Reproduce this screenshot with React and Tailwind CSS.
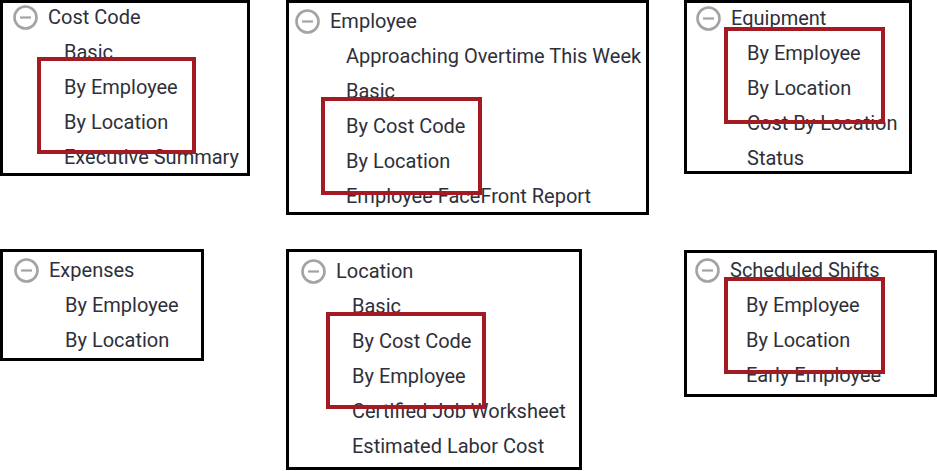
import React from "react";

const panels = [
  {
    title: "Cost Code",
    items: ["Basic", "By Employee", "By Location", "Executive Summary"],
    box: "left-0 top-0 w-[250px] h-[176px]",
    list: "-mt-[3px] pl-[10px]",
    red: "left-[34px] top-[54px] w-[159px] h-[97px]",
  },
  {
    title: "Employee",
    items: ["Approaching Overtime This Week", "Basic", "By Cost Code", "By Location", "Employee FaceFront Report"],
    box: "left-[286px] top-0 w-[363px] h-[215px]",
    list: "mt-[1px] pl-[6px]",
    red: "left-[32px] top-[94px] w-[161px] h-[98px]",
  },
  {
    title: "Equipment",
    items: ["By Employee", "By Location", "Cost By Location", "Status"],
    box: "left-[684px] top-0 w-[228px] h-[174px]",
    list: "-mt-[2px] pl-[9px]",
    red: "left-[37px] top-[24px] w-[161px] h-[97px]",
  },
  {
    title: "Expenses",
    items: ["By Employee", "By Location"],
    box: "left-0 top-[249px] w-[204px] h-[112px]",
    list: "mt-[1px] pl-[11px]",
  },
  {
    title: "Location",
    items: ["Basic", "By Cost Code", "By Employee", "Certified Job Worksheet", "Estimated Labor Cost"],
    box: "left-[286px] top-[249px] w-[296px] h-[221px]",
    list: "mt-[2px] pl-[12px]",
    red: "left-[37px] top-[60px] w-[160px] h-[97px]",
  },
  {
    title: "Scheduled Shifts",
    items: ["By Employee", "By Location", "Early Employee"],
    box: "left-[684px] top-[250px] w-[253px] h-[147px]",
    list: "pl-[8px]",
    red: "left-[37px] top-[24px] w-[161px] h-[97px]",
  },
];

function MinusCircle() {
  return (
    <svg width="25" height="25" viewBox="0 0 25 25" className="shrink-0">
      <circle cx="12.5" cy="12.5" r="11" fill="none" stroke="#a3a3a3" strokeWidth="2.6" />
      <line x1="7" y1="12.5" x2="18" y2="12.5" stroke="#a3a3a3" strokeWidth="2.2" />
    </svg>
  );
}

function Panel({ p }) {
  return (
    <div className={`absolute ${p.box} border-[3px] border-black bg-white overflow-hidden`}>
      <div className={`${p.list} text-[20px] leading-[35px] text-[#2f2f3a] whitespace-nowrap`}>
        <div className="flex items-center gap-[10px]">
          <MinusCircle />
          <span>{p.title}</span>
        </div>
        <div className="pl-[51px]">
          {p.items.map((it) => (
            <div key={it}>{it}</div>
          ))}
        </div>
      </div>
      {p.red && <div className={`absolute ${p.red} border-4 border-[#a31a22]`} />}
    </div>
  );
}

export default function App() {
  return (
    <div className="relative w-[937px] h-[471px] bg-white font-['Roboto',sans-serif]">
      {panels.map((p) => (
        <Panel key={p.title} p={p} />
      ))}
    </div>
  );
}
